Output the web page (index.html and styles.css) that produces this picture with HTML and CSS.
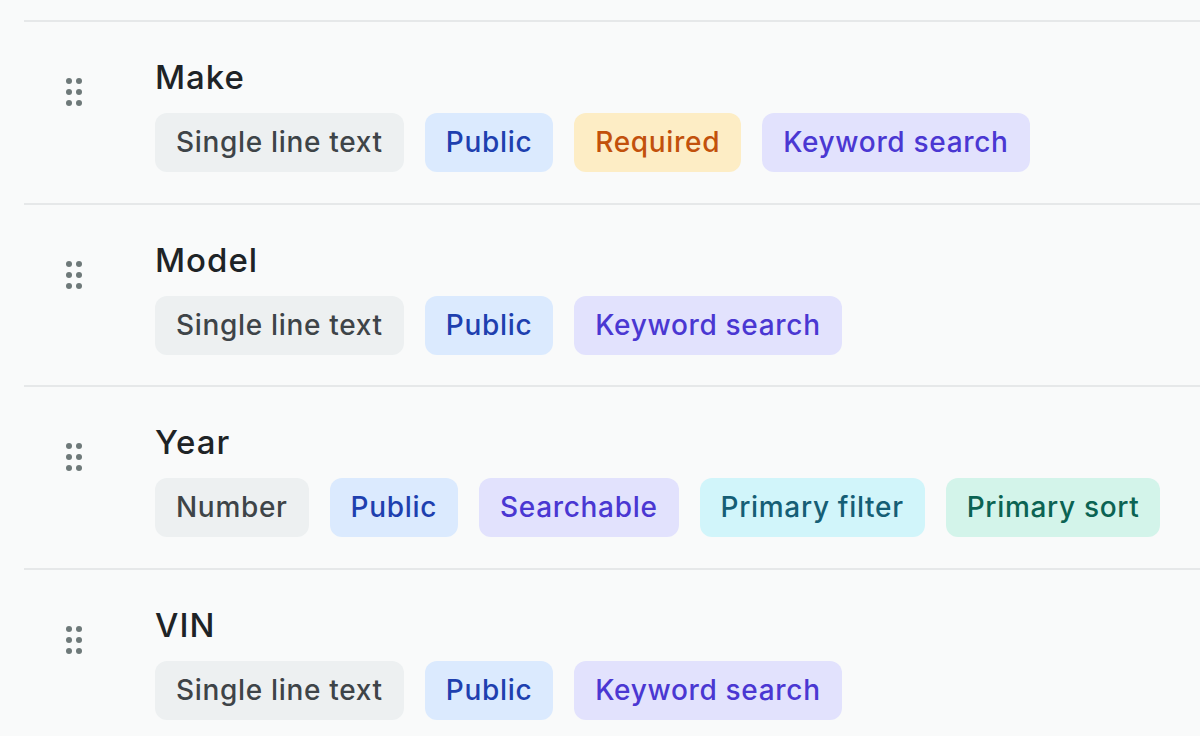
FILE: index.html
```html
<!DOCTYPE html>
<html lang="en">
<head>
<meta charset="utf-8">
<title>Fields</title>
<link rel="stylesheet" href="styles.css">
</head>
<body>
<div class="list">
  <div class="row">
    <svg class="handle" width="20" height="30" viewBox="0 0 20 30"><circle cx="5" cy="4" r="3"/><circle cx="15" cy="4" r="3"/><circle cx="5" cy="15" r="3"/><circle cx="15" cy="15" r="3"/><circle cx="5" cy="26" r="3"/><circle cx="15" cy="26" r="3"/></svg>
    <div class="body">
      <div class="title">Make</div>
      <div class="tags">
        <span class="tag gray">Single line text</span>
        <span class="tag blue">Public</span>
        <span class="tag amber">Required</span>
        <span class="tag indigo">Keyword search</span>
      </div>
    </div>
  </div>
  <div class="row">
    <svg class="handle" width="20" height="30" viewBox="0 0 20 30"><circle cx="5" cy="4" r="3"/><circle cx="15" cy="4" r="3"/><circle cx="5" cy="15" r="3"/><circle cx="15" cy="15" r="3"/><circle cx="5" cy="26" r="3"/><circle cx="15" cy="26" r="3"/></svg>
    <div class="body">
      <div class="title">Model</div>
      <div class="tags">
        <span class="tag gray">Single line text</span>
        <span class="tag blue">Public</span>
        <span class="tag indigo">Keyword search</span>
      </div>
    </div>
  </div>
  <div class="row">
    <svg class="handle" width="20" height="30" viewBox="0 0 20 30"><circle cx="5" cy="4" r="3"/><circle cx="15" cy="4" r="3"/><circle cx="5" cy="15" r="3"/><circle cx="15" cy="15" r="3"/><circle cx="5" cy="26" r="3"/><circle cx="15" cy="26" r="3"/></svg>
    <div class="body">
      <div class="title">Year</div>
      <div class="tags">
        <span class="tag gray">Number</span>
        <span class="tag blue">Public</span>
        <span class="tag indigo">Searchable</span>
        <span class="tag cyan">Primary filter</span>
        <span class="tag green">Primary sort</span>
      </div>
    </div>
  </div>
  <div class="row">
    <svg class="handle" width="20" height="30" viewBox="0 0 20 30"><circle cx="5" cy="4" r="3"/><circle cx="15" cy="4" r="3"/><circle cx="5" cy="15" r="3"/><circle cx="15" cy="15" r="3"/><circle cx="5" cy="26" r="3"/><circle cx="15" cy="26" r="3"/></svg>
    <div class="body">
      <div class="title">VIN</div>
      <div class="tags">
        <span class="tag gray">Single line text</span>
        <span class="tag blue">Public</span>
        <span class="tag indigo">Keyword search</span>
      </div>
    </div>
  </div>
</div>
</body>
</html>
```
FILE: styles.css
```css
html, body {
  margin: 0;
  padding: 0;
  background: #f9fafa;
  font-family: Inter, "Noto Sans", sans-serif;
  overflow: hidden;
}
.list {
  padding-top: 20px;
  margin-left: 24px;
}
.row {
  display: flex;
  align-items: flex-start;
  border-top: 2px solid #e6e8e9;
  padding: 35px 0 30.7px 40px;
}
.handle {
  flex: none;
  margin-top: 20px;
  margin-right: 71px;
  fill: #6e7979;
}
.body {
  display: flex;
  flex-direction: column;
  gap: 16px;
}
.title {
  font-size: 33px;
  line-height: 40px;
  font-weight: 500;
  letter-spacing: 1px;
  color: #1e2326;
}
.tags {
  display: flex;
  gap: 21px;
}
.tag {
  font-size: 28px;
  line-height: 36px;
  font-weight: 500;
  letter-spacing: 0.68px;
  padding: 11px 21px 12px;
  border-radius: 12px;
  white-space: nowrap;
}
.gray { background: #edf0f1; color: #3e4448; }
.blue { background: #dbeafe; color: #1e40af; }
.amber { background: #fdedc5; color: #c2510c; }
.indigo { background: #e2e2fd; color: #4a37d2; }
.cyan { background: #d1f5fa; color: #155e75; }
.green { background: #d3f4ea; color: #0b6353; }
```
